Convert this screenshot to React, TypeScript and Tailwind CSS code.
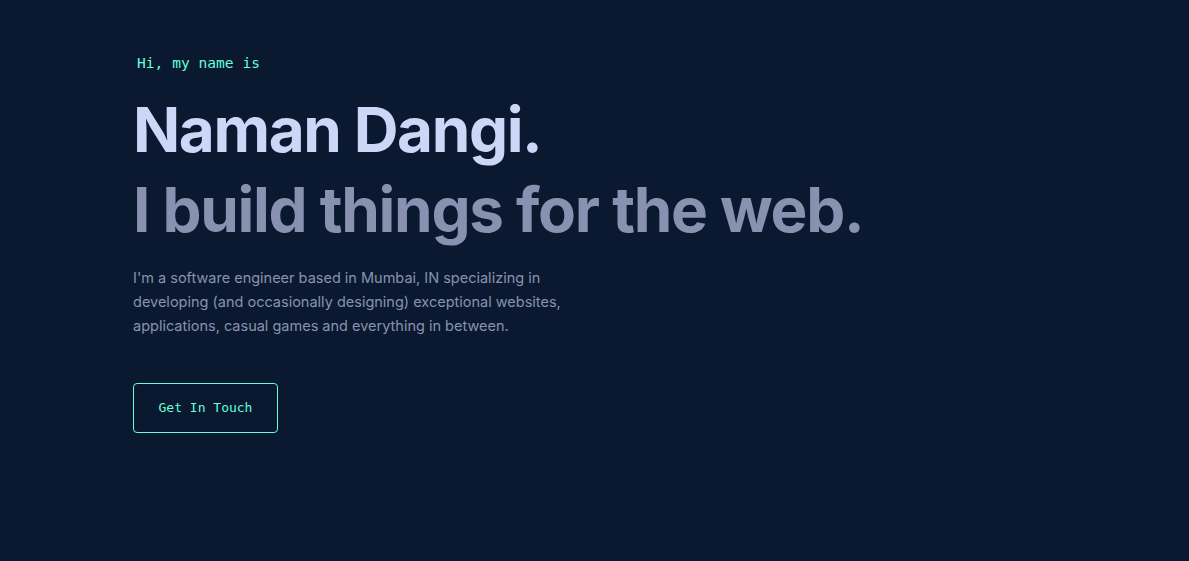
export default function App() {
  const mono = { fontFamily: '"DejaVu Sans Mono", "Liberation Mono", monospace' };
  return (
    <div className="min-h-[561px] w-full bg-[#0a192f]" style={{ fontFamily: 'Inter, "Noto Sans", sans-serif' }}>
      <section className="flex flex-col items-start px-[133px] pt-[51px]">
        <h1 className="ml-[4px] text-[14.6px] leading-[24px] text-[#64ffda]" style={mono}>
          Hi, my name is
        </h1>
        <h2 className="mt-[14px] text-[62px] font-bold leading-[81px] tracking-[-1.4px] text-[#ccd6f6]">
          Naman Dangi.
        </h2>
        <h3 className="text-[62px] font-bold leading-[80px] tracking-[-1.3px] text-[#8892b0]">
          I build things for the web.
        </h3>
        <p className="mt-[16px] max-w-[440px] text-[14.5px] leading-[24px] text-[#8892b0]">
          I'm a software engineer based in Mumbai, IN specializing in developing (and occasionally designing)
          exceptional websites, applications, casual games and everything in between.
        </p>
        <button
          className="mt-[45px] h-[50px] w-[145px] rounded-[4px] border border-[#64ffda] text-[13px] text-[#64ffda]"
          style={mono}
        >
          Get In Touch
        </button>
      </section>
    </div>
  );
}
